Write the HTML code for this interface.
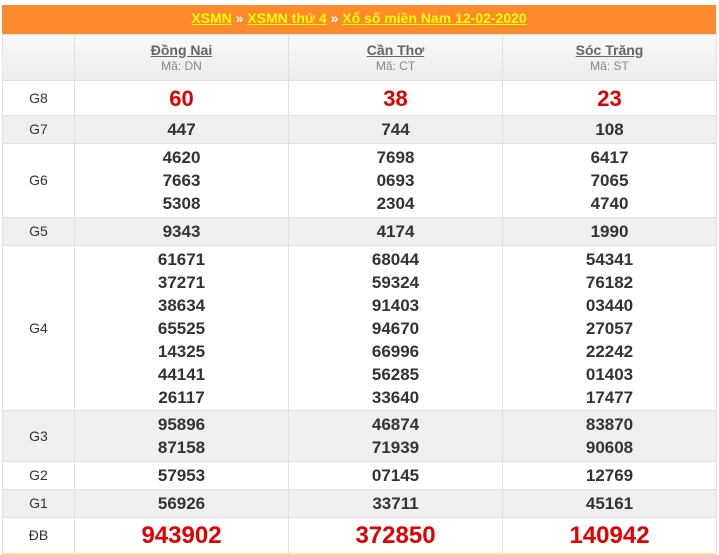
<!DOCTYPE html>
<html><head><meta charset="utf-8"><style>
body{margin:0;background:#fff;font-family:"Liberation Sans",Arial,sans-serif;width:719px;height:555px;overflow:hidden;position:relative}
.bar{position:absolute;left:2px;top:5px;width:714px;height:29px;background:#fd8b2d;text-align:center;line-height:27px;font-size:14px;font-weight:bold;color:#fff}
.bar a{color:#ffff00;text-decoration:underline}
table{position:absolute;left:2px;top:34px;width:714px;border-collapse:collapse;table-layout:fixed}
td{border:1px solid #e0e0e0;text-align:center;padding:0;color:#333;font-weight:bold;font-size:17px;line-height:23px}
td.l{font-weight:normal;font-size:14px;color:#333}
tr.g td{background:#efefef}
tr.h td{background:linear-gradient(#f8f8f8,#ececec);height:45px;font-size:14px;line-height:16px;color:#555}
tr.h small{display:block;font-weight:normal;font-size:12px;color:#888}
tr.h u{color:#666}
.r{color:#e40000;font-size:22px}
.db{color:#e40000;font-size:24px}
.bot{position:absolute;left:2px;top:553px;width:714px;height:2px;background:#f5e39a}
</style></head><body>
<div class="bar"><a>XSMN</a> » <a>XSMN thứ 4</a> » <a>Xổ số miền Nam 12-02-2020</a></div>
<table>
<col style="width:72px"><col style="width:214px"><col style="width:214px"><col style="width:214px">
<tr class="h"><td></td><td><u>Đồng Nai</u><small>Mã: DN</small></td><td><u>Cần Thơ</u><small>Mã: CT</small></td><td><u>Sóc Trăng</u><small>Mã: ST</small></td></tr>
<tr style="height:35px"><td class="l">G8</td><td class="r">60</td><td class="r">38</td><td class="r">23</td></tr>
<tr class="g" style="height:28px"><td class="l">G7</td><td>447</td><td>744</td><td>108</td></tr>
<tr style="height:74px"><td class="l">G6</td><td>4620<br>7663<br>5308</td><td>7698<br>0693<br>2304</td><td>6417<br>7065<br>4740</td></tr>
<tr class="g" style="height:28px"><td class="l">G5</td><td>9343</td><td>4174</td><td>1990</td></tr>
<tr style="height:165px"><td class="l">G4</td><td>61671<br>37271<br>38634<br>65525<br>14325<br>44141<br>26117</td><td>68044<br>59324<br>91403<br>94670<br>66996<br>56285<br>33640</td><td>54341<br>76182<br>03440<br>27057<br>22242<br>01403<br>17477</td></tr>
<tr class="g" style="height:51px"><td class="l">G3</td><td>95896<br>87158</td><td>46874<br>71939</td><td>83870<br>90608</td></tr>
<tr style="height:28px"><td class="l">G2</td><td>57953</td><td>07145</td><td>12769</td></tr>
<tr class="g" style="height:28px"><td class="l">G1</td><td>56926</td><td>33711</td><td>45161</td></tr>
<tr style="height:36px"><td class="l">ĐB</td><td class="db">943902</td><td class="db">372850</td><td class="db">140942</td></tr>
</table>
<div class="bot"></div>
</body></html>
